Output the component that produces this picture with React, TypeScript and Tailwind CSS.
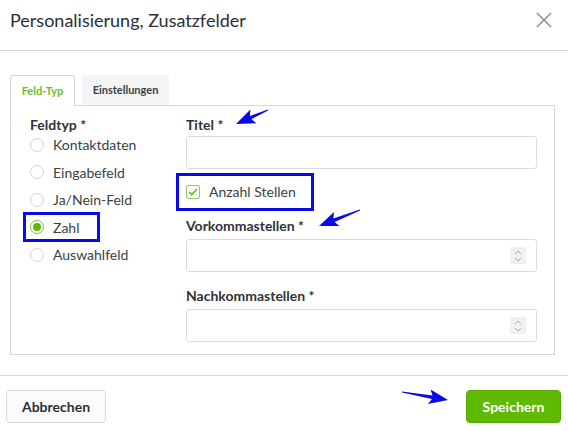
import React from 'react';

const font = { fontFamily: 'Lato, "Open Sans", sans-serif' };

type Pt = [number, number];

// annotation arrow: thin shaft, wide head
function arrowPoints(tail: Pt, tip: Pt, head = 16, half = 7.5, shaft = 1.8): string {
  const dx = tip[0] - tail[0];
  const dy = tip[1] - tail[1];
  const len = Math.hypot(dx, dy);
  const ux = dx / len;
  const uy = dy / len;
  const nx = -uy;
  const ny = ux;
  const bx = tip[0] - ux * head;
  const by = tip[1] - uy * head;
  const p = (x: number, y: number) => `${x.toFixed(1)},${y.toFixed(1)}`;
  return [
    p(tail[0] + nx * 0.4, tail[1] + ny * 0.4),
    p(bx + nx * shaft, by + ny * shaft),
    p(bx - ux * 3 + nx * half, by - uy * 3 + ny * half),
    p(tip[0], tip[1]),
    p(bx - ux * 3 - nx * half, by - uy * 3 - ny * half),
    p(bx - nx * shaft, by - ny * shaft),
    p(tail[0] - nx * 0.4, tail[1] - ny * 0.4),
  ].join(' ');
}

const Radio: React.FC<{ label: string; checked?: boolean }> = ({ label, checked }) => (
  <div className="flex items-center h-[27.5px]">
    <span
      className={`w-[14px] h-[14px] rounded-full border flex items-center justify-center bg-white ${
        checked ? 'border-[#7cc242]' : 'border-[#cfd3d8]'
      }`}
    >
      {checked && <span className="w-[8px] h-[8px] rounded-full bg-[#5fb80a]" />}
    </span>
    <span className="ml-[9px] text-[14px] text-[#3a3f44]">{label}</span>
  </div>
);

const Spinner = () => (
  <div className="w-[16px] h-[17px] bg-[#eef0f2] flex flex-col items-center justify-center gap-[2px]">
    <svg width="8" height="5" viewBox="0 0 8 5">
      <path d="M1 4 L4 1 L7 4" fill="none" stroke="#a3a9b0" strokeWidth="1" />
    </svg>
    <svg width="8" height="5" viewBox="0 0 8 5">
      <path d="M1 1 L4 4 L7 1" fill="none" stroke="#a3a9b0" strokeWidth="1" />
    </svg>
  </div>
);

const NumberInput = () => (
  <div className="h-[33px] w-[351px] border border-[#d9dde2] rounded-[3px] bg-white flex items-center justify-end pr-[10px]">
    <Spinner />
  </div>
);

export default function App() {
  return (
    <div className="relative w-[568px] h-[431px] bg-white text-[#2f3338] overflow-hidden" style={font}>
      {/* header */}
      <div className="h-[51px] border-b border-[#d3d8dd] flex items-start justify-between pl-[10px] pr-[16px] pt-[9px]">
        <h1 className="text-[18px] leading-[22px] text-[#2b2f33]">Personalisierung, Zusatzfelder</h1>
        <svg width="16" height="16" viewBox="0 0 16 16" className="mt-[3px]">
          <path d="M1 1 L15 15 M15 1 L1 15" stroke="#8a929b" strokeWidth="1.6" />
        </svg>
      </div>

      {/* body */}
      <div className="pt-[24px] pl-[10px] pr-[13px]">
        <div className="flex gap-[7px] h-[30px] relative z-10">
          <div className="w-[65px] h-[31px] border border-b-0 border-[#d3d8dd] rounded-t-[3px] bg-white flex items-center justify-center text-[11px] font-bold text-[#69bd2a]">
            Feld-Typ
          </div>
          <div className="w-[87px] h-[30px] bg-[#f4f5f7] rounded-t-[3px] flex items-center justify-center text-[11px] font-bold text-[#3a3f44]">
            Einstellungen
          </div>
        </div>
        <div className="border border-[#d3d8dd] h-[250px] flex pl-[19px] pr-[17px] pt-[10px]">
          <div className="w-[156px]">
            <div className="text-[14px] font-bold leading-[18px] text-[#2f3338]">Feldtyp *</div>
            <div className="-mt-[3px]">
              <Radio label="Kontaktdaten" />
              <Radio label="Eingabefeld" />
              <Radio label="Ja/Nein-Feld" />
              <Radio label="Zahl" checked />
              <Radio label="Auswahlfeld" />
            </div>
          </div>
          <div className="flex-1">
            <div className="text-[14px] font-bold leading-[18px]">Titel *</div>
            <div className="mt-[2px] h-[33px] w-[351px] border border-[#d9dde2] rounded-[3px] bg-white" />
            <div className="flex items-center h-[45px]">
              <span className="w-[14px] h-[14px] border border-[#8fcd5c] rounded-[2px] bg-white flex items-center justify-center">
                <svg width="10" height="8" viewBox="0 0 10 8">
                  <path d="M1.2 4 L3.8 6.5 L8.8 1.2" fill="none" stroke="#5fb80a" strokeWidth="1.6" />
                </svg>
              </span>
              <span className="ml-[9px] text-[14px] text-[#3a3f44]">Anzahl Stellen</span>
            </div>
            <div className="text-[14px] font-bold leading-[18px] mt-[3px]">Vorkommastellen *</div>
            <div className="mt-[4px]">
              <NumberInput />
            </div>
            <div className="text-[14px] font-bold leading-[18px] mt-[15px]">Nachkommastellen *</div>
            <div className="mt-[4px]">
              <NumberInput />
            </div>
          </div>
        </div>
      </div>

      {/* footer */}
      <div className="mt-[20px] border-t border-[#d3d8dd] flex justify-between pl-[6px] pr-[7px] pt-[14px]">
        <button className="w-[100px] h-[33px] rounded-[4px] border border-[#d3d8dd] bg-[#fbfbfc] text-[14px] font-bold text-[#2b2f33]">
          Abbrechen
        </button>
        <button className="w-[95px] h-[33px] rounded-[4px] border border-[#56a805] bg-[#60ba03] text-[14px] font-bold text-white">
          Speichern
        </button>
      </div>

      {/* annotations */}
      <div className="absolute left-[23px] top-[212px] w-[77px] h-[30px] border-[3px] border-[#0a0ae6] pointer-events-none" />
      <div className="absolute left-[176px] top-[173px] w-[138px] h-[38px] border-[3px] border-[#0a0ae6] pointer-events-none" />
      <svg className="absolute inset-0 pointer-events-none" width="568" height="431">
        <polygon points={arrowPoints([268, 110], [236, 124])} fill="#0a0ae6" />
        <polygon points={arrowPoints([360, 210], [319, 226])} fill="#0a0ae6" />
        <polygon points={arrowPoints([402, 392], [448, 400])} fill="#0a0ae6" />
      </svg>
    </div>
  );
}
